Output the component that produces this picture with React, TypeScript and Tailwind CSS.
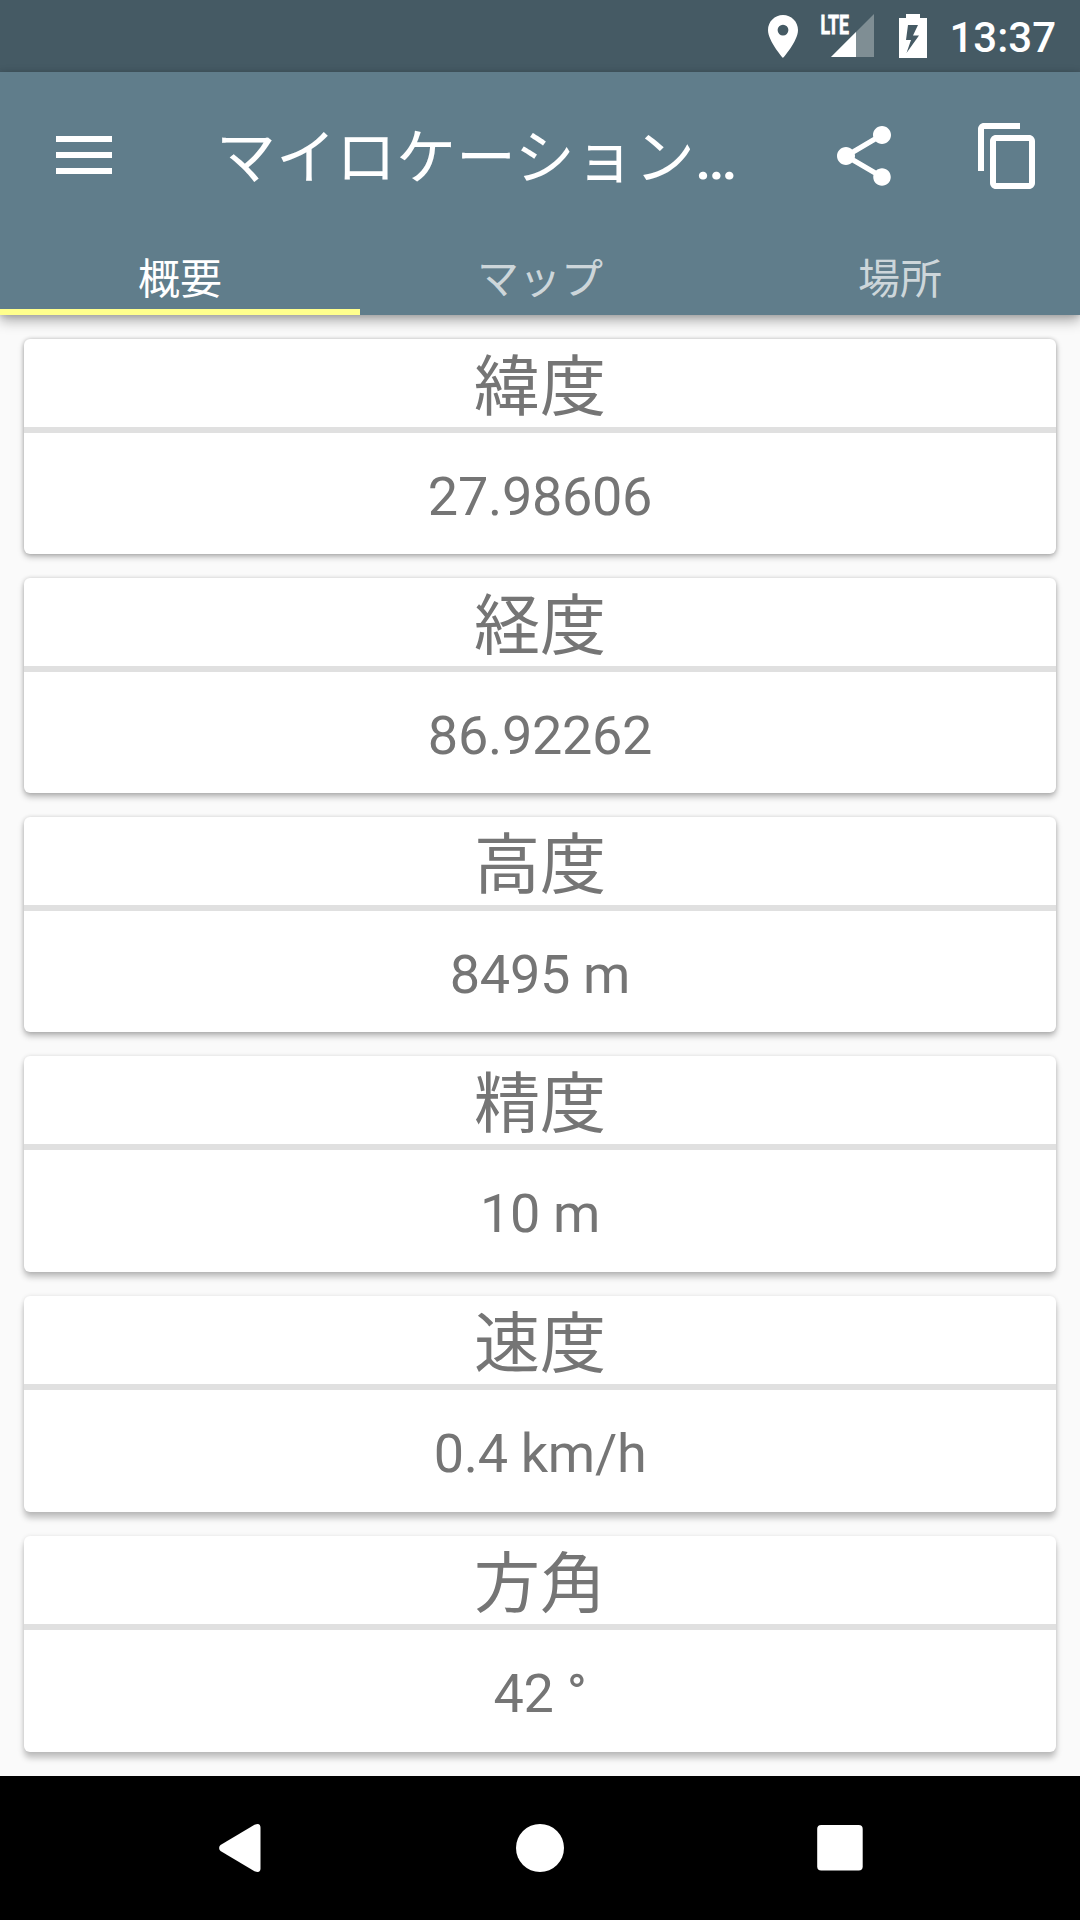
const tabs = ["概要", "マップ", "場所"];

// Shadows get deeper towards the bottom of the screen
const cards = [
    { title: "緯度", value: "27.98606", style: "h-[215px] shadow-[0_3px_6px_rgba(0,0,0,0.26),0_0_4px_rgba(0,0,0,0.2)]" },
    { title: "経度", value: "86.92262", style: "h-[215px] shadow-[0_4px_6px_rgba(0,0,0,0.26),0_0_4px_rgba(0,0,0,0.17)]" },
    { title: "高度", value: "8495 m", style: "h-[215px] shadow-[0_4px_6px_rgba(0,0,0,0.27),0_0_4px_rgba(0,0,0,0.14)]" },
    { title: "精度", value: "10 m", style: "h-[216px] shadow-[0_5px_6px_rgba(0,0,0,0.24),0_0_4px_rgba(0,0,0,0.12)]" },
    { title: "速度", value: "0.4 km/h", style: "h-[216px] shadow-[0_6px_6px_rgba(0,0,0,0.23),0_0_4px_rgba(0,0,0,0.1)]" },
    { title: "方角", value: "42 °", style: "h-[216px] shadow-[0_6px_6px_rgba(0,0,0,0.23),0_0_4px_rgba(0,0,0,0.09)]" },
];

function StatusBar() {
    return (
        <div className="h-[72px] shrink-0 bg-[#455a64] flex items-end justify-end pr-6 pb-[14px] text-white">
            {/* Location pin */}
            <svg width="30" height="43" viewBox="0 0 30 43" fill="currentColor" className="mr-[23px]">
                <path
                    fillRule="evenodd"
                    d="M15 0C6.7 0 0 6.7 0 15c0 11.2 15 28 15 28s15-16.800 15-28C30 6.700 23.300 0 15 0Zm0 20.500a5.400 5.400 0 1 1 0-10.800 5.400 5.400 0 0 1 0 10.800Z"
                />
            </svg>

            {/* LTE signal */}
            <svg width="53" height="43" viewBox="0 0 53 43" fill="currentColor" className="mr-[25px] mb-px overflow-visible">
                <path d="M53 0v43H10z" fill="#7f8e94" />
                <path d="M35 18v25H10z" />
                <text
                    x="-0.5"
                    y="19.700"
                    fontSize="26"
                    textLength="28.500"
                    lengthAdjust="spacingAndGlyphs"
                    stroke="currentColor"
                    strokeWidth="0.8"
                    className="font-bold"
                >
                    LTE
                </text>
            </svg>

            {/* Charging battery */}
            <svg width="28" height="44" viewBox="0 0 28 44" fill="currentColor" className="mr-[22px]">
                <path fillRule="evenodd" d="M7 0h14v4h7v40H0V4h7zM9 11 7 26h5L7.500 39 20 21.500h-6L19 11z" />
            </svg>

            <span className="-mb-px text-[42px] leading-none font-medium">13:37</span>
        </div>
    );
}

function AppBar() {
    return (
        <header className="relative z-10 h-[243px] shrink-0 bg-[#607d8b] text-white flex flex-col shadow-[0_6px_12px_rgba(0,0,0,0.3),0_1px_6px_rgba(0,0,0,0.15)]">
            <div className="h-[168px] flex items-center">
                <svg width="56" height="38" viewBox="0 0 56 38" fill="currentColor" className="ml-14 mb-0.5">
                    <path d="M0 0h56v6H0zM0 16h56v6H0zM0 32h56v6H0z" />
                </svg>
                <h1 className="ml-[104px] w-[550px] pt-[5px] text-[60px] leading-[72px] font-normal whitespace-nowrap">
                    マイロケーション<span className="font-medium">…</span>
                </h1>
                <svg width="72" height="72" viewBox="0 0 24 24" fill="currentColor" className="ml-[62px]">
                    <path d="M18 16.080c-.76 0-1.440.3-1.960.77L8.910 12.700c.05-.23.09-.46.09-.7s-.04-.47-.09-.7l7.050-4.110c.54.5 1.250.81 2.040.81 1.660 0 3-1.340 3-3s-1.340-3-3-3-3 1.340-3 3c0 .24.04.47.09.7L8.040 9.810C7.500 9.310 6.790 9 6 9c-1.660 0-3 1.340-3 3s1.340 3 3 3c.79 0 1.500-.31 2.040-.81l7.120 4.160c-.05.21-.08.43-.08.65 0 1.610 1.310 2.920 2.920 2.920s2.920-1.310 2.920-2.920-1.310-2.920-2.920-2.920z" />
                </svg>
                <svg width="72" height="72" viewBox="0 0 24 24" fill="currentColor" className="ml-[72px]">
                    <path d="M16 1H4c-1.100 0-2 .9-2 2v14h2V3h12V1zm3 4H8c-1.100 0-2 .9-2 2v14c0 1.100.9 2 2 2h11c1.100 0 2-.9 2-2V7c0-1.100-.9-2-2-2zm0 16H8V7h11v14z" />
                </svg>
            </div>

            <nav className="flex-1 flex">
                {tabs.map((tab, i) => (
                    <div
                        key={tab}
                        className={`flex-1 flex justify-center border-b-[6px] pt-[14px] text-[42px] leading-[52px] ${
                            i === 0 ? "border-[#ffff8d] text-white" : "border-transparent text-white/70"
                        }`}
                    >
                        {tab}
                    </div>
                ))}
            </nav>
        </header>
    );
}

export default function App() {
    return (
        <div className="w-[1080px] h-[1920px] flex flex-col overflow-hidden bg-[#fafafa] font-[Roboto,'Noto_Sans_CJK_JP',sans-serif]">
            <StatusBar />
            <AppBar />

            <main className="flex-1 flex flex-col gap-6 px-6 pt-6">
                {cards.map((card) => (
                    <section
                        key={card.title}
                        className={`${card.style} shrink-0 flex flex-col rounded-md bg-white text-[#757575] text-center`}
                    >
                        <h2 className="h-[88px] text-[66px] leading-[97px] font-normal">{card.title}</h2>
                        <div className="h-[6px] bg-[#e0e0e0]" />
                        <p className="flex-1 flex items-center justify-center pt-1.5 text-[54px] leading-none tracking-[-0.3px]">
                            {card.value}
                        </p>
                    </section>
                ))}
            </main>

            {/* System navigation */}
            <footer className="h-36 shrink-0 bg-black text-white">
                <svg width="1080" height="144" viewBox="0 0 1080 144" fill="currentColor">
                    <path d="M254.500 48.800 220.500 69a4 4 0 0 0 0 6l34 20.200q6 2.500 6-3V51.800q0-5.500-6-3Z" />
                    <circle cx="540" cy="72" r="24" />
                    <rect x="817.200" y="49" width="45.500" height="45.500" rx="4" />
                </svg>
            </footer>
        </div>
    );
}
